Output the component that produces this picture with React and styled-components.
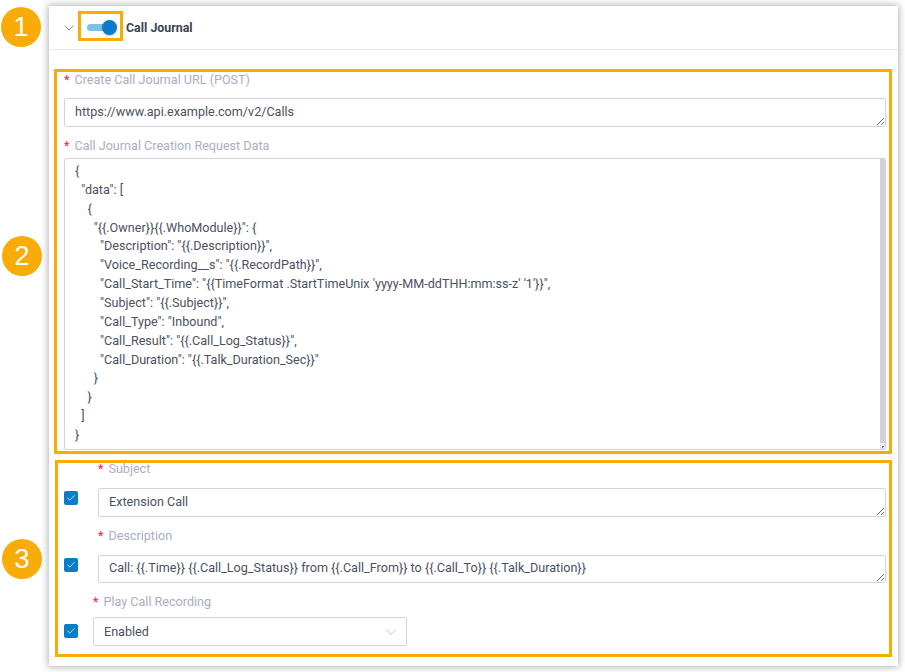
import React from 'react'
import styled, { createGlobalStyle } from 'styled-components'
import { Check, ChevronDown } from 'lucide-react'

const GlobalStyle = createGlobalStyle`
html, body {
  margin: 0;
  background: #fff;
}
`

const Page = styled.div`
width: 905px;
height: 672px;
box-sizing: border-box;
padding: 6px 0 0 49px;
overflow: hidden;
font-family: Roboto, "Liberation Sans", sans-serif;
`

const Card = styled.div`
position: relative;
width: 849px;
height: 660px;
box-sizing: border-box;
background: #fff;
box-shadow: 0 0 7px 1px rgba(60, 60, 60, 0.4);
`

const Header = styled.div`
height: 44px;
box-sizing: border-box;
display: flex;
align-items: center;
padding-left: 12px;
border-bottom: 1px solid #e9e9ec;
`

const Collapse = styled(ChevronDown)`
width: 16px;
height: 16px;
color: #5c6675;
stroke-width: 1.2;
margin-right: 1px;
`

const ToggleBox = styled.div`
width: 45px;
height: 30px;
box-sizing: border-box;
border: 3px solid #f9ab07;
display: flex;
align-items: center;
justify-content: center;
margin: -4px 3px 0 0;
`

const Track = styled.div`
position: relative;
width: 28px;
height: 7px;
margin: 3px 0 0 1px;
border-radius: 4px;
background: #7dc1e8;
`

const Knob = styled.div`
position: absolute;
right: -2px;
top: -4px;
width: 15px;
height: 15px;
border-radius: 50%;
background: #0a7cc8;
box-shadow: 0 1px 2px rgba(0, 0, 0, 0.25);
`

const Title = styled.div`
font-size: 12.4px;
font-weight: 700;
color: #3b4554;
`

const Section = styled.div`
position: relative;
box-sizing: border-box;
border: 3px solid #f9ab07;
width: ${p => p.$width}px;
height: ${p => p.$height}px;
margin: ${p => p.$margin};
`

const Badge = styled.div`
position: absolute;
left: ${p => p.$left}px;
top: ${p => p.$top}px;
width: 40px;
height: 40px;
border-radius: 50%;
background: #f9ab07;
color: #fff;
font-family: "Liberation Sans", sans-serif;
font-size: 27px;
line-height: 40px;
text-align: center;
`

const Column = styled.div`
display: flex;
flex-direction: column;
padding: 0 3px 0 7px;
`

const Label = styled.div`
height: ${p => p.$height || 16}px;
line-height: ${p => p.$height || 16}px;
margin: ${p => p.$margin || 0};
font-size: 12.6px;
color: #aaadc2;
white-space: nowrap;
&::before {
  content: '*';
  color: #f5222d;
  margin-right: 5px;
}
`

const TextBox = styled.textarea`
display: block;
width: 100%;
height: ${p => p.$height}px;
box-sizing: border-box;
border: 1px solid #d3d2e0;
border-radius: 2px;
padding: 0 10px;
margin: 0;
outline: none;
background: #fff;
font-family: Roboto, "Liberation Sans", sans-serif;
font-size: 12.6px;
line-height: ${p => p.$line || p.$height - 2}px;
color: #4a5160;
resize: both;
overflow: hidden;
`

const CodeWrap = styled.div`
position: relative;
height: 292px;
`

const CodeBox = styled(TextBox)`
height: 292px;
padding: 3px 10px 0;
line-height: 18.86px;
white-space: pre;
resize: none;
`

const ScrollThumb = styled.div`
position: absolute;
top: 1px;
right: 1px;
width: 5px;
height: 284px;
background: #d2d2d4;
`

const ScrollCorner = styled.div`
position: absolute;
right: 1px;
bottom: 1px;
width: 5px;
height: 5px;
box-sizing: border-box;
border: 1px solid #e4e4e8;
background: radial-gradient(circle, #666 0 1px, transparent 1px);
`

const Row = styled.div`
display: flex;
padding: 0 3px 0 6px;
`

const Tick = styled.span`
flex: none;
align-self: flex-end;
width: 14px;
height: 14px;
margin-bottom: ${p => p.$bottom}px;
border-radius: 2px;
background: #0a7cc8;
color: #fff;
display: flex;
align-items: center;
justify-content: center;
`

const TickIcon = styled(Check)`
width: 10px;
height: 10px;
stroke-width: 1.8;
`

const Field = styled.div`
margin-left: ${p => p.$indent}px;
flex: ${p => (p.$wide ? 1 : 'none')};
min-width: 0;
`

const Select = styled.div`
width: 314px;
height: 29px;
box-sizing: border-box;
border: 1px solid #d3d2e0;
border-radius: 2px;
padding: 0 6px 0 10px;
display: flex;
align-items: center;
justify-content: space-between;
font-size: 12.6px;
color: #4a5160;
`

const SelectArrow = styled(ChevronDown)`
width: 18px;
height: 18px;
color: #c4c4c8;
stroke-width: 1.3;
`

const requestData = `{
  "data": [
    {
      "{{.Owner}}{{.WhoModule}}": {
        "Description": "{{.Description}}",
        "Voice_Recording__s": "{{.RecordPath}}",
        "Call_Start_Time": "{{TimeFormat .StartTimeUnix 'yyyy-MM-ddTHH:mm:ss-z' '1'}}",
        "Subject": "{{.Subject}}",
        "Call_Type": "Inbound",
        "Call_Result": "{{.Call_Log_Status}}",
        "Call_Duration": "{{.Talk_Duration_Sec}}"
      }
    }
  ]
}`

const description = 'Call: {{.Time}} {{.Call_Log_Status}} from {{.Call_From}} to {{.Call_To}} {{.Talk_Duration}}'

export default function App() {
  return (
    <Page>
      <GlobalStyle />
      <Card>
        <Badge $left={-48} $top={1}>1</Badge>
        <Header>
          <Collapse />
          <ToggleBox>
            <Track><Knob /></Track>
          </ToggleBox>
          <Title>Call Journal</Title>
        </Header>

        <Section $width={838} $height={385} $margin="19px 0 0 5px">
          <Badge $left={-55} $top={164}>2</Badge>
          <Column>
            <Label $margin="0 0 10px">Create Call Journal URL (POST)</Label>
            <TextBox $height={29} $line={25} readOnly defaultValue="https://www.api.example.com/v2/Calls" />
            <Label $margin="11px 0 4px">Call Journal Creation Request Data</Label>
            <CodeWrap>
              <CodeBox readOnly defaultValue={requestData} />
              <ScrollThumb />
              <ScrollCorner />
            </CodeWrap>
          </Column>
        </Section>

        <Section $width={837} $height={197} $margin="6px 0 0 6px">
          <Badge $left={-56} $top={76}>3</Badge>
          <Row>
            <Tick $bottom={12}><TickIcon /></Tick>
            <Field $indent={20} $wide>
              <Label $height={12} $margin="0 0 13px">Subject</Label>
              <TextBox $height={29} $line={25} readOnly defaultValue="Extension Call" />
            </Field>
          </Row>
          <Row>
            <Tick $bottom={11}><TickIcon /></Tick>
            <Field $indent={20} $wide>
              <Label $height={12} $margin="13px 0 13px">Description</Label>
              <TextBox $height={28} $line={24} readOnly defaultValue={description} />
            </Field>
          </Row>
          <Row>
            <Tick $bottom={8}><TickIcon /></Tick>
            <Field $indent={15}>
              <Label $height={12} $margin="13px 0 9px">Play Call Recording</Label>
              <Select>
                Enabled
                <SelectArrow />
              </Select>
            </Field>
          </Row>
        </Section>
      </Card>
    </Page>
  )
}
